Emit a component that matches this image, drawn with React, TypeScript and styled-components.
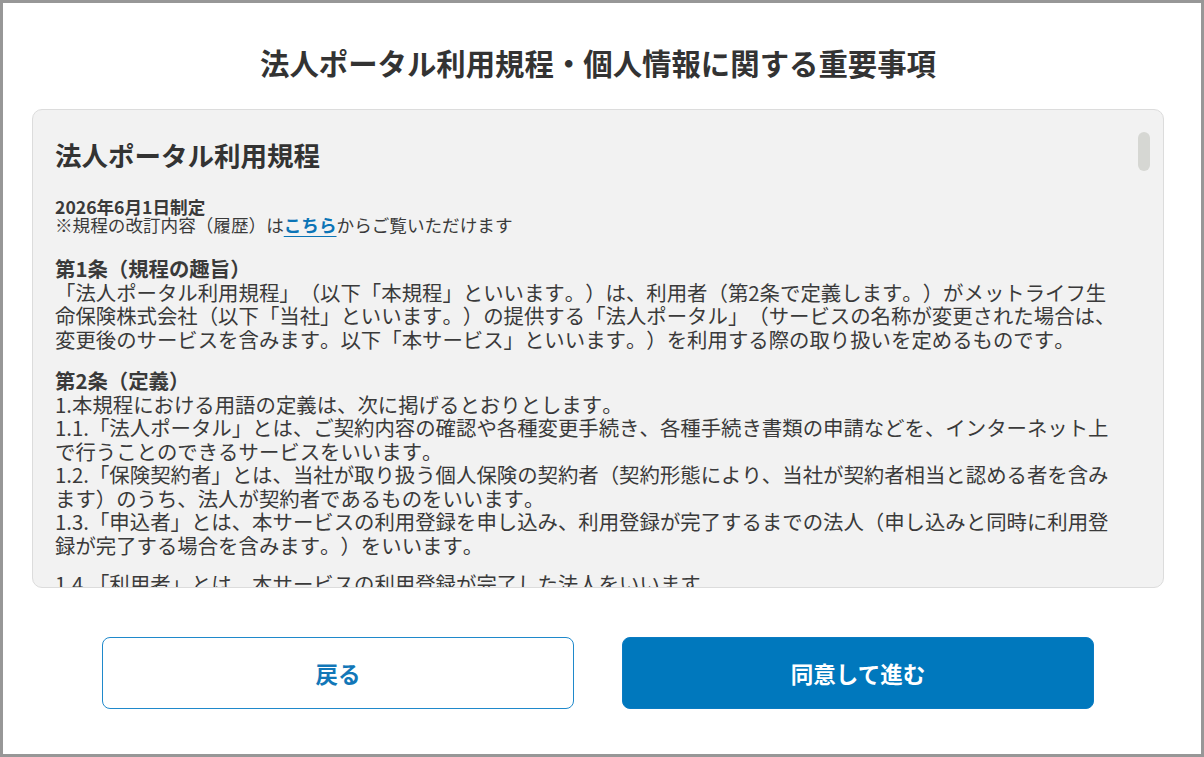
import * as React from 'react';
import styled, { createGlobalStyle } from 'styled-components';

const GlobalStyle = createGlobalStyle`
  html,
  body {
    margin: 0;
    padding: 0;
    background: #fff;
  }

  body {
    font-family: 'Noto Sans CJK JP', 'Noto Sans', sans-serif;
    color: #333;
    text-spacing-trim: space-all;
    font-kerning: none;
  }
`;

const Frame = styled.div`
  box-sizing: border-box;
  width: 1204px;
  height: 757px;
  border: 3px solid #979797;
  padding: 39px 37px 0 29px;
  display: flex;
  flex-direction: column;
`;

const Title = styled.h1`
  margin: 0;
  font-size: 29.4px;
  line-height: 40px;
  font-weight: 700;
  text-align: center;
  color: #333;
`;

const TermsBox = styled.section`
  position: relative;
  box-sizing: border-box;
  height: 479px;
  margin-top: 27px;
  border: 1px solid #dcdcdc;
  border-radius: 10px;
  background: #f2f2f2;
  overflow: hidden;
`;

const Scroll = styled.div`
  height: 100%;
  padding: 28px 38px 0 22px;
  overflow: hidden;
  color: #3a3a3a;
`;

const ScrollThumb = styled.div`
  position: absolute;
  top: 22px;
  right: 13px;
  width: 12px;
  height: 39px;
  border-radius: 6px;
  background: #d6d7d3;
`;

const Heading = styled.h2`
  margin: 0;
  font-size: 26.5px;
  line-height: 34px;
  font-weight: 700;
  color: #333;
`;

const Meta = styled.div`
  margin-top: 26px;
  font-size: 17.6px;
  line-height: 18px;
`;

const Enacted = styled.div`
  font-weight: 700;
`;

const Link = styled.a`
  color: #0b74b6;
  font-weight: 700;
  text-decoration: underline;
  text-decoration-thickness: 1px;
  text-underline-offset: 4px;
`;

const Article = styled.div<{ $first?: boolean }>`
  margin-top: ${p => (p.$first ? '23px' : '18px')};
  font-size: 20.4px;
  line-height: 23.5px;
`;

const ArticleTitle = styled.div`
  font-weight: 700;
`;

const Para = styled.p<{ $gap?: boolean }>`
  margin: ${p => (p.$gap ? '15px 0 0' : '0')};
`;

const Actions = styled.div`
  display: grid;
  grid-template-columns: 472px 472px;
  justify-content: center;
  gap: 48px;
  margin-top: 49px;
`;

const Button = styled.button<{ $primary?: boolean }>`
  box-sizing: border-box;
  height: 72px;
  border-radius: 8px;
  font-family: inherit;
  font-size: 22.5px;
  font-weight: 700;
  cursor: pointer;
  border: ${p => (p.$primary ? '1px solid #0a7bc2' : '1.5px solid #1f89cb')};
  background: ${p => (p.$primary ? '#0078bd' : '#fff')};
  color: ${p => (p.$primary ? '#fff' : '#1277b8')};
`;

const definitions = [
  { text: '1.本規程における用語の定義は、次に掲げるとおりとします。' },
  {
    text: '1.1.「法人ポータル」とは、ご契約内容の確認や各種変更手続き、各種手続き書類の申請などを、インターネット上で行うことのできるサービスをいいます。',
  },
  {
    text: '1.2.「保険契約者」とは、当社が取り扱う個人保険の契約者（契約形態により、当社が契約者相当と認める者を含みます）のうち、法人が契約者であるものをいいます。',
  },
  {
    text: '1.3.「申込者」とは、本サービスの利用登録を申し込み、利用登録が完了するまでの法人（申し込みと同時に利用登録が完了する場合を含みます。）をいいます。',
  },
  { text: '1.4.「利用者」とは、本サービスの利用登録が完了した法人をいいます。', gap: true },
];

export default function App() {
  return (
    <>
      <GlobalStyle />
      <Frame>
        <Title>法人ポータル利用規程・個人情報に関する重要事項</Title>
        <TermsBox>
          <Scroll>
            <Heading>法人ポータル利用規程</Heading>
            <Meta>
              <Enacted>2026年6月1日制定</Enacted>
              <div>
                ※規程の改訂内容（履歴）は<Link href="#">こちら</Link>からご覧いただけます
              </div>
            </Meta>
            <Article $first>
              <ArticleTitle>第1条（規程の趣旨）</ArticleTitle>
              <Para>
                「法人ポータル利用規程」（以下「本規程」といいます。）は、利用者（第2条で定義します。）がメットライフ生命保険株式会社（以下「当社」といいます。）の提供する「法人ポータル」（サービスの名称が変更された場合は、変更後のサービスを含みます。以下「本サービス」といいます。）を利用する際の取り扱いを定めるものです。
              </Para>
            </Article>
            <Article>
              <ArticleTitle>第2条（定義）</ArticleTitle>
              {definitions.map(item => (
                <Para key={item.text} $gap={item.gap}>
                  {item.text}
                </Para>
              ))}
            </Article>
          </Scroll>
          <ScrollThumb />
        </TermsBox>
        <Actions>
          <Button>戻る</Button>
          <Button $primary>同意して進む</Button>
        </Actions>
      </Frame>
    </>
  );
}
